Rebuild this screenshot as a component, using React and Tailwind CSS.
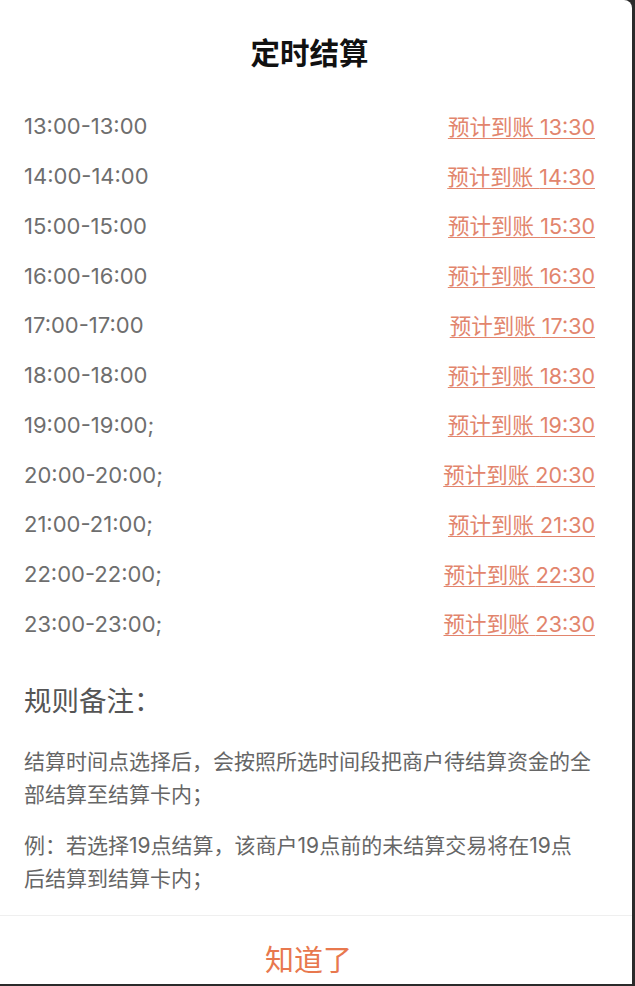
import React from "react";

const rows = [
  ["13:00-13:00", "13:30"],
  ["14:00-14:00", "14:30"],
  ["15:00-15:00", "15:30"],
  ["16:00-16:00", "16:30"],
  ["17:00-17:00", "17:30"],
  ["18:00-18:00", "18:30"],
  ["19:00-19:00;", "19:30"],
  ["20:00-20:00;", "20:30"],
  ["21:00-21:00;", "21:30"],
  ["22:00-22:00;", "22:30"],
  ["23:00-23:00;", "23:30"],
];

export default function App() {
  return (
    <div
      className="w-[635px] h-[986px] bg-[#2b2b2b] overflow-hidden"
      style={{ fontFamily: 'Inter, "Noto Sans CJK SC", sans-serif' }}
    >
      <div className="w-[632px] h-[984px] bg-white rounded-tr-[8px] flex flex-col overflow-hidden">
        <div className="pl-6 pr-[37px]">
          <h1 className="pt-[34px] h-[71px] text-center text-[29.5px] leading-[38px] font-bold text-[#111]">
            定时结算
          </h1>
          <div className="mt-[31px] flex flex-col">
            {rows.map(([t, a]) => (
              <div key={t} className="h-[49.75px] flex items-center justify-between">
                <span className="text-[22px] text-[#6e6e6e]">{t}</span>
                <span className="text-[21.5px] text-[#e2856d] underline underline-offset-[3px] decoration-1">
                  预计到账 {a}
                </span>
              </div>
            ))}
          </div>
          <div className="mt-[35px] h-[34px] leading-[34px] text-[27.5px] text-[#555]">规则备注：</div>
          <p className="mt-[27px] w-[580px] text-[21px] leading-[33px] text-[#666]">
            结算时间点选择后，会按照所选时间段把商户待结算资金的全
            <br />
            部结算至结算卡内；
          </p>
          <p className="mt-[18px] w-[580px] text-[21px] leading-[33px] text-[#666]">
            例：若选择19点结算，该商户19点前的未结算交易将在19点
            <br />
            后结算到结算卡内；
          </p>
        </div>
        <div className="mt-auto h-px bg-[#efefef]" />
        <div className="h-[68px] pr-[15px] flex items-start justify-center pt-[27px]">
          <span className="text-[29px] leading-[36px] text-[#e8784e]">知道了</span>
        </div>
      </div>
    </div>
  );
}
